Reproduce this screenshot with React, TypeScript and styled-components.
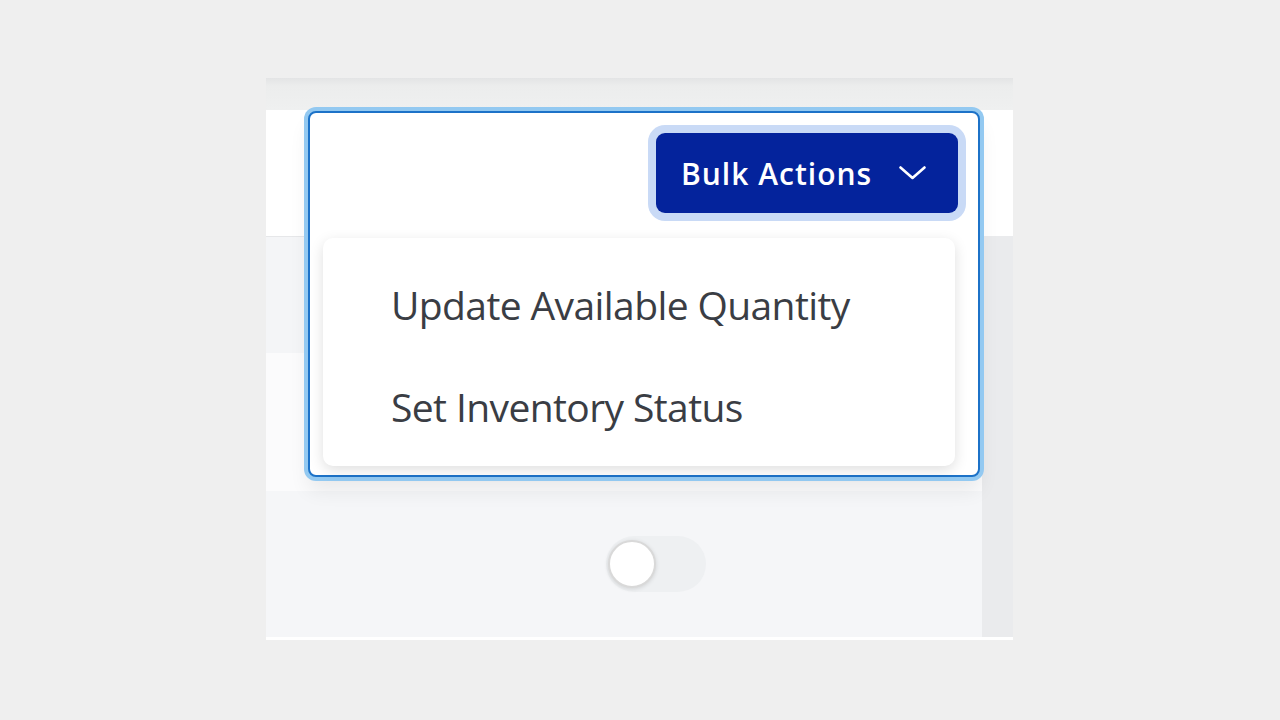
import styled, { createGlobalStyle } from 'styled-components';

const GlobalStyle = createGlobalStyle`
  html, body {
    margin: 0;
    padding: 0;
    background: #efefef;
  }
  body {
    font-family: 'Open Sans', 'Noto Sans', sans-serif;
  }
`;

const Page = styled.div`
  width: 1280px;
  height: 720px;
  padding: 78px 0 0 266px;
  box-sizing: border-box;
`;

const Panel = styled.div`
  position: relative;
  width: 747px;
  height: 562px;
  display: flex;
  flex-direction: column;
  background: #ffffff;
  padding-bottom: 4px;
  box-sizing: border-box;
`;

const TopShade = styled.div`
  height: 32px;
  flex-shrink: 0;
  background: linear-gradient(to bottom, #e3e4e5 0, #eceded 8px, #eff0f0 100%);
`;

const Body = styled.div`
  flex: 1;
  display: flex;
`;

const Table = styled.div`
  flex: 1;
  display: flex;
  flex-direction: column;
`;

const Gutter = styled.div`
  width: 31px;
  background: linear-gradient(to bottom, #ffffff 0 126px, #eaebed 126px);
`;

const Row = styled.div<{ $height: number; $bg: string; $line?: boolean }>`
  height: ${(p) => p.$height}px;
  flex-shrink: 0;
  background: ${(p) => p.$bg};
  border-bottom: ${(p) => (p.$line ? '1px solid #e6e7e9' : 'none')};
  display: flex;
  align-items: center;
`;

const ToggleCell = styled.div`
  padding-left: 340px;
`;

const Track = styled.div`
  width: 100px;
  height: 56px;
  border-radius: 28px;
  background: #eef0f2;
  display: flex;
  align-items: center;
  padding-left: 2px;
  box-sizing: border-box;
`;

const Knob = styled.div`
  width: 48px;
  height: 48px;
  border-radius: 50%;
  background: #ffffff;
  border: 2px solid #d9d9d9;
  box-sizing: border-box;
  box-shadow: 0 1px 4px rgba(0, 0, 0, 0.12);
`;

const FocusFrame = styled.div`
  position: absolute;
  left: 42px;
  top: 33px;
  width: 672px;
  height: 366px;
  box-sizing: border-box;
  border: 2px solid #1c72c8;
  border-radius: 8px;
  box-shadow: 0 0 0 4px #93c9f1, 0 14px 20px rgba(0, 0, 0, 0.07);
  background: #ffffff;
  display: flex;
  flex-direction: column;
  padding: 20px 20px 9px 13px;
`;

const ButtonRow = styled.div`
  display: flex;
  justify-content: flex-end;
`;

const BulkButton = styled.button`
  width: 302px;
  height: 80px;
  border: none;
  border-radius: 9px;
  background: #04239c;
  color: #ffffff;
  box-shadow: 0 0 0 8px #c9daf6;
  display: flex;
  align-items: center;
  gap: 27px;
  padding: 0 0 0 25px;
  font-family: 'Open Sans', 'Noto Sans', sans-serif;
  font-weight: 600;
  font-size: 30px;
  letter-spacing: 1px;
  cursor: pointer;
`;

const Menu = styled.ul`
  list-style: none;
  margin: 25px 0 0;
  width: 632px;
  height: 228px;
  box-sizing: border-box;
  padding: 15px 0 9px;
  background: #ffffff;
  border-radius: 10px;
  box-shadow: 0 4px 14px rgba(0, 0, 0, 0.13);
`;

const MenuItem = styled.li`
  height: 102px;
  display: flex;
  align-items: center;
  padding-left: 68px;
  font-size: 39px;
  letter-spacing: -0.6px;
  color: #3a3d44;
`;

const Chevron = () => (
  <svg width="27" height="14" viewBox="0 0 27 14" fill="none">
    <polyline points="1.5,1.5 13.5,12 25.5,1.5" stroke="#ffffff" strokeWidth="2.6" strokeLinecap="round" strokeLinejoin="round" />
  </svg>
);

const App = () => {
  return (
    <>
      <GlobalStyle />
      <Page>
        <Panel>
          <TopShade />
          <Body>
            <Table>
              <Row $height={126} $bg="#ffffff" $line />
              <Row $height={116} $bg="#f4f5f7" />
              <Row $height={138} $bg="#fbfbfc" />
              <Row $height={146} $bg="#f5f6f8">
                <ToggleCell>
                  <Track>
                    <Knob />
                  </Track>
                </ToggleCell>
              </Row>
            </Table>
            <Gutter />
          </Body>
          <FocusFrame>
            <ButtonRow>
              <BulkButton>
                Bulk Actions
                <Chevron />
              </BulkButton>
            </ButtonRow>
            <Menu>
              <MenuItem>Update Available Quantity</MenuItem>
              <MenuItem>Set Inventory Status</MenuItem>
            </Menu>
          </FocusFrame>
        </Panel>
      </Page>
    </>
  );
};

export default App;
